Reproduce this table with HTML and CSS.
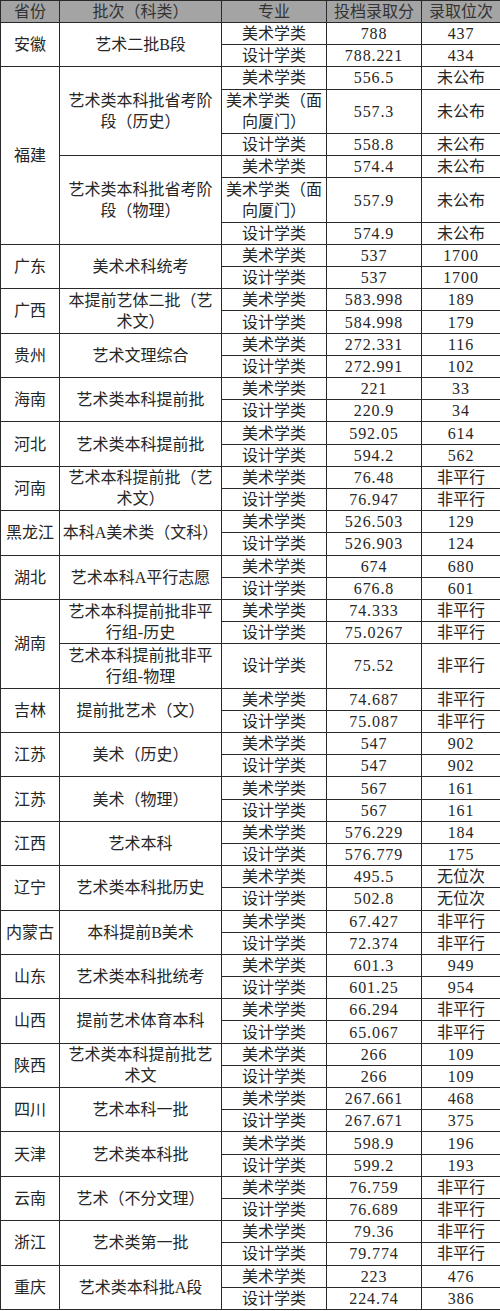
FILE: index.html
```html
<!DOCTYPE html>
<html lang="zh-CN">
<head>
<meta charset="utf-8">
<title>艺术类录取分数</title>
<link rel="stylesheet" href="styles.css">
</head>
<body>
<table class="score">
<colgroup>
<col class="c1"><col class="c2"><col class="c3"><col class="c4"><col class="c5">
</colgroup>
<thead>
<tr class="head"><th>省份</th><th>批次（科类）</th><th>专业</th><th>投档录取分</th><th>录取位次</th></tr>
</thead>
<tbody>
<tr><td rowspan="2">安徽</td><td rowspan="2">艺术二批B段</td><td>美术学类</td><td class="num">788</td><td class="num">437</td></tr>
<tr><td>设计学类</td><td class="num">788.221</td><td class="num">434</td></tr>

<tr><td rowspan="6">福建</td><td rowspan="3">艺术类本科批省考阶段（历史）</td><td>美术学类</td><td class="num">556.5</td><td>未公布</td></tr>
<tr class="tall"><td>美术学类（面向厦门）</td><td class="num">557.3</td><td>未公布</td></tr>
<tr><td>设计学类</td><td class="num">558.8</td><td>未公布</td></tr>
<tr><td rowspan="3">艺术类本科批省考阶段（物理）</td><td>美术学类</td><td class="num">574.4</td><td>未公布</td></tr>
<tr class="tall"><td>美术学类（面向厦门）</td><td class="num">557.9</td><td>未公布</td></tr>
<tr><td>设计学类</td><td class="num">574.9</td><td>未公布</td></tr>

<tr><td rowspan="2">广东</td><td rowspan="2">美术术科统考</td><td>美术学类</td><td class="num">537</td><td class="num">1700</td></tr>
<tr><td>设计学类</td><td class="num">537</td><td class="num">1700</td></tr>

<tr><td rowspan="2">广西</td><td rowspan="2">本提前艺体二批（艺术文）</td><td>美术学类</td><td class="num">583.998</td><td class="num">189</td></tr>
<tr><td>设计学类</td><td class="num">584.998</td><td class="num">179</td></tr>

<tr><td rowspan="2">贵州</td><td rowspan="2">艺术文理综合</td><td>美术学类</td><td class="num">272.331</td><td class="num">116</td></tr>
<tr><td>设计学类</td><td class="num">272.991</td><td class="num">102</td></tr>

<tr><td rowspan="2">海南</td><td rowspan="2">艺术类本科提前批</td><td>美术学类</td><td class="num">221</td><td class="num">33</td></tr>
<tr><td>设计学类</td><td class="num">220.9</td><td class="num">34</td></tr>

<tr><td rowspan="2">河北</td><td rowspan="2">艺术类本科提前批</td><td>美术学类</td><td class="num">592.05</td><td class="num">614</td></tr>
<tr><td>设计学类</td><td class="num">594.2</td><td class="num">562</td></tr>

<tr><td rowspan="2">河南</td><td rowspan="2">艺术本科提前批（艺术文）</td><td>美术学类</td><td class="num">76.48</td><td>非平行</td></tr>
<tr><td>设计学类</td><td class="num">76.947</td><td>非平行</td></tr>

<tr><td rowspan="2">黑龙江</td><td rowspan="2">本科A美术类（文科）</td><td>美术学类</td><td class="num">526.503</td><td class="num">129</td></tr>
<tr><td>设计学类</td><td class="num">526.903</td><td class="num">124</td></tr>

<tr><td rowspan="2">湖北</td><td rowspan="2">艺术本科A平行志愿</td><td>美术学类</td><td class="num">674</td><td class="num">680</td></tr>
<tr><td>设计学类</td><td class="num">676.8</td><td class="num">601</td></tr>

<tr><td rowspan="3">湖南</td><td rowspan="2">艺术本科提前批非平行组-历史</td><td>美术学类</td><td class="num">74.333</td><td>非平行</td></tr>
<tr><td>设计学类</td><td class="num">75.0267</td><td>非平行</td></tr>
<tr class="tall"><td>艺术本科提前批非平行组-物理</td><td>设计学类</td><td class="num">75.52</td><td>非平行</td></tr>

<tr><td rowspan="2">吉林</td><td rowspan="2">提前批艺术（文）</td><td>美术学类</td><td class="num">74.687</td><td>非平行</td></tr>
<tr><td>设计学类</td><td class="num">75.087</td><td>非平行</td></tr>

<tr><td rowspan="2">江苏</td><td rowspan="2">美术（历史）</td><td>美术学类</td><td class="num">547</td><td class="num">902</td></tr>
<tr><td>设计学类</td><td class="num">547</td><td class="num">902</td></tr>

<tr><td rowspan="2">江苏</td><td rowspan="2">美术（物理）</td><td>美术学类</td><td class="num">567</td><td class="num">161</td></tr>
<tr><td>设计学类</td><td class="num">567</td><td class="num">161</td></tr>

<tr><td rowspan="2">江西</td><td rowspan="2">艺术本科</td><td>美术学类</td><td class="num">576.229</td><td class="num">184</td></tr>
<tr><td>设计学类</td><td class="num">576.779</td><td class="num">175</td></tr>

<tr><td rowspan="2">辽宁</td><td rowspan="2">艺术类本科批历史</td><td>美术学类</td><td class="num">495.5</td><td>无位次</td></tr>
<tr><td>设计学类</td><td class="num">502.8</td><td>无位次</td></tr>

<tr><td rowspan="2">内蒙古</td><td rowspan="2">本科提前B美术</td><td>美术学类</td><td class="num">67.427</td><td>非平行</td></tr>
<tr><td>设计学类</td><td class="num">72.374</td><td>非平行</td></tr>

<tr><td rowspan="2">山东</td><td rowspan="2">艺术类本科批统考</td><td>美术学类</td><td class="num">601.3</td><td class="num">949</td></tr>
<tr><td>设计学类</td><td class="num">601.25</td><td class="num">954</td></tr>

<tr><td rowspan="2">山西</td><td rowspan="2">提前艺术体育本科</td><td>美术学类</td><td class="num">66.294</td><td>非平行</td></tr>
<tr><td>设计学类</td><td class="num">65.067</td><td>非平行</td></tr>

<tr><td rowspan="2">陕西</td><td rowspan="2">艺术类本科提前批艺术文</td><td>美术学类</td><td class="num">266</td><td class="num">109</td></tr>
<tr><td>设计学类</td><td class="num">266</td><td class="num">109</td></tr>

<tr><td rowspan="2">四川</td><td rowspan="2">艺术本科一批</td><td>美术学类</td><td class="num">267.661</td><td class="num">468</td></tr>
<tr><td>设计学类</td><td class="num">267.671</td><td class="num">375</td></tr>

<tr><td rowspan="2">天津</td><td rowspan="2">艺术类本科批</td><td>美术学类</td><td class="num">598.9</td><td class="num">196</td></tr>
<tr><td>设计学类</td><td class="num">599.2</td><td class="num">193</td></tr>

<tr><td rowspan="2">云南</td><td rowspan="2">艺术（不分文理）</td><td>美术学类</td><td class="num">76.759</td><td>非平行</td></tr>
<tr><td>设计学类</td><td class="num">76.689</td><td>非平行</td></tr>

<tr><td rowspan="2">浙江</td><td rowspan="2">艺术类第一批</td><td>美术学类</td><td class="num">79.36</td><td>非平行</td></tr>
<tr><td>设计学类</td><td class="num">79.774</td><td>非平行</td></tr>

<tr><td rowspan="2">重庆</td><td rowspan="2">艺术类本科批A段</td><td>美术学类</td><td class="num">223</td><td class="num">476</td></tr>
<tr><td>设计学类</td><td class="num">224.74</td><td class="num">386</td></tr>
</tbody>
</table>
</body>
</html>
```
FILE: styles.css
```css
html, body {
  margin: 0;
  padding: 0;
  background: #ffffff;
}

body {
  font-family: "Liberation Serif", "Noto Sans CJK SC", serif;
  font-size: 16px;
  color: #262626;
}

.score {
  width: 500px;
  table-layout: fixed;
  border-collapse: collapse;
  border: 1px solid #2a2a2a;
}

.c1 { width: 59px; }
.c2 { width: 162px; }
.c3 { width: 105px; }
.c4 { width: 95px; }
.c5 { width: 79px; }

.score th,
.score td {
  border: 1px solid #2a2a2a;
  padding: 0 2px;
  text-align: center;
  vertical-align: middle;
  line-height: 21px;
  font-weight: 400;
}

.head th {
  background: #a4a4a4;
  color: #333333;
  height: 21px;
}

.score tbody tr {
  height: 22.2px;
}

.score tbody tr.tall {
  height: 44.4px;
}

.num {
  font-family: "Liberation Serif", serif;
  letter-spacing: 0.9px;
}
```
